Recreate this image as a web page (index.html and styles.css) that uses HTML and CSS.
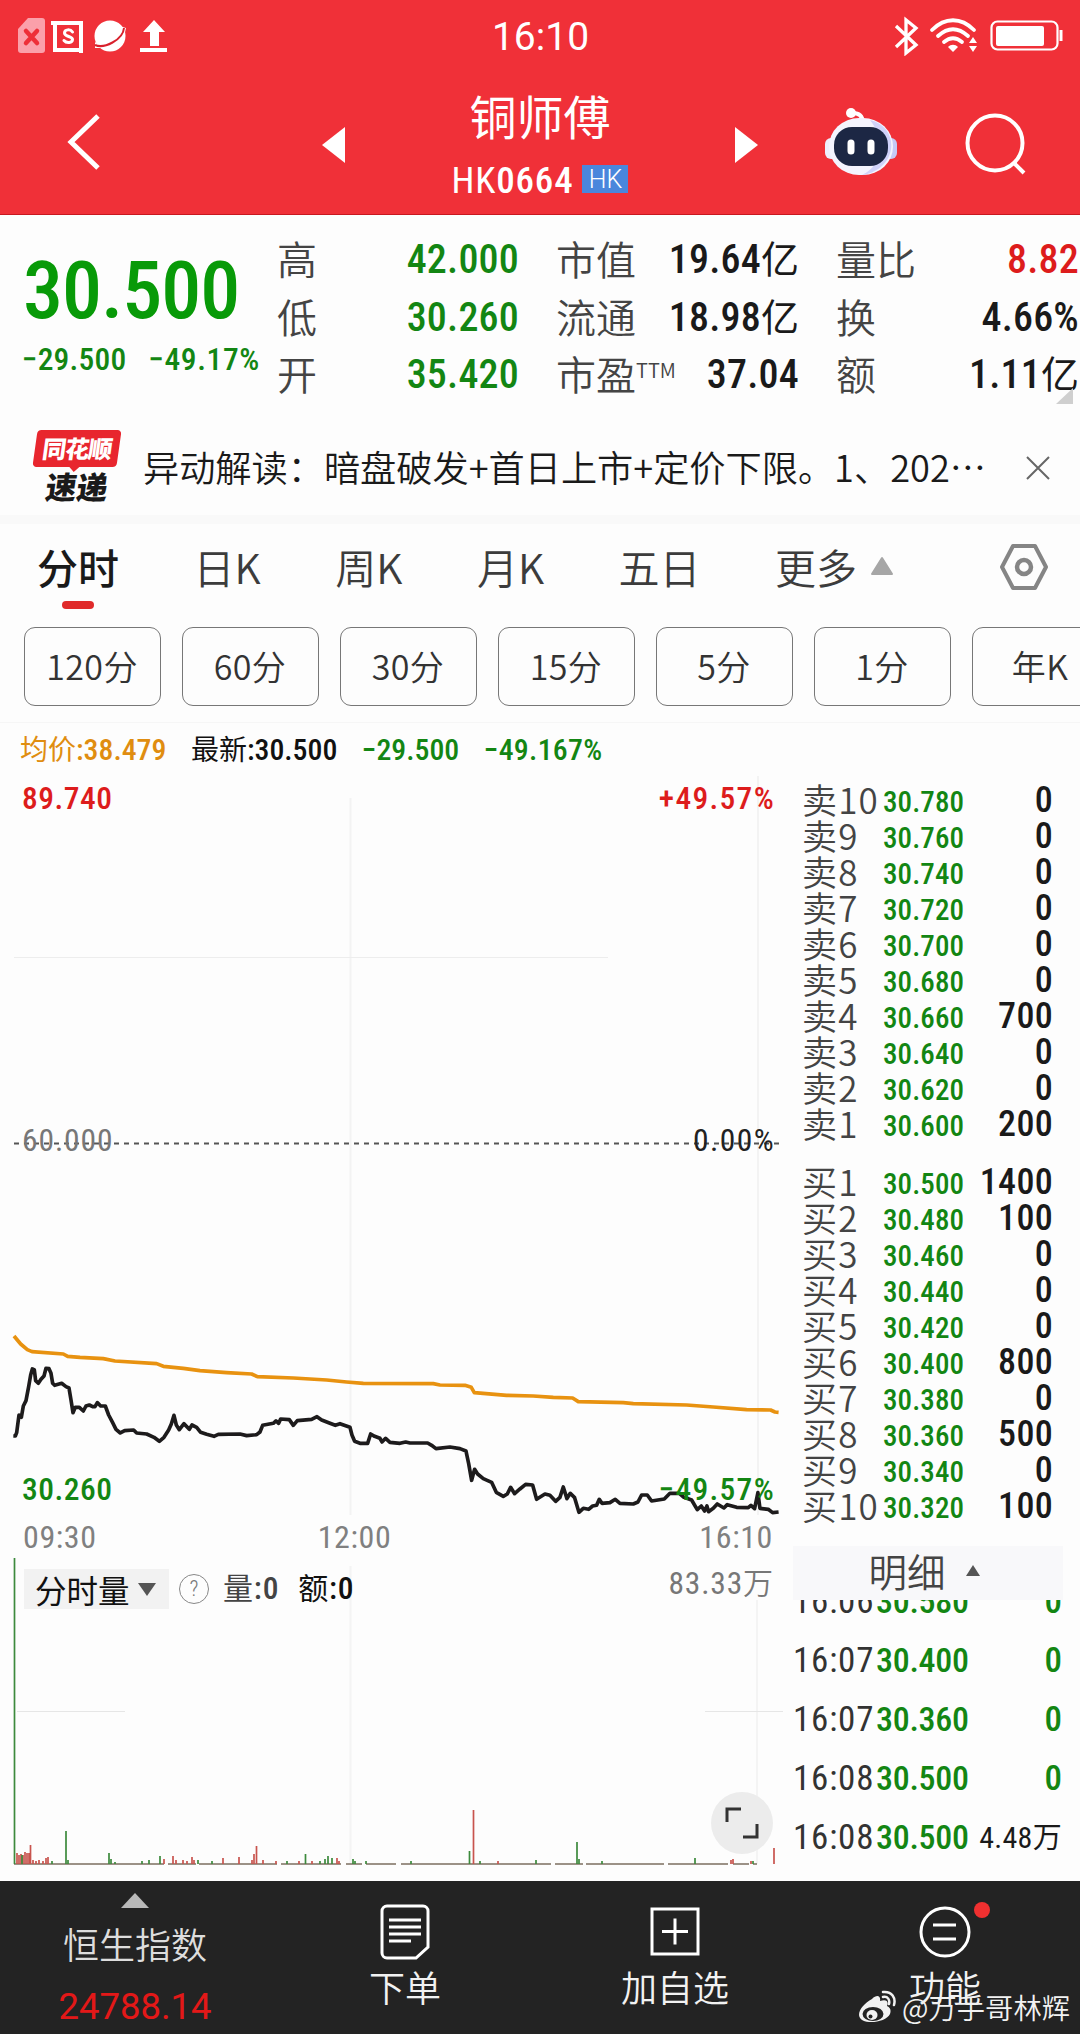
FILE: index.html
```
<!DOCTYPE html>
<html lang="zh-CN">
<head>
    <meta charset="UTF-8">
    <meta name="viewport" content="width=device-width, initial-scale=1.0">
    <title>铜师傅 HK0664</title>
    <link rel="stylesheet" href="styles.css">
</head>
<body>

    <header class="header">
        <div class="status-bar">
            <svg class="status-left" width="156" height="40" viewBox="0 0 156 40">
                <path d="M10 2h14a3 3 0 0 1 3 3v29a3 3 0 0 1-3 3H3a3 3 0 0 1-3-3V13z" fill="#fba0aa"/>
                <path d="M8 15l11 12M19 15L8 27" stroke="#ee2f38" stroke-width="4.5" stroke-linecap="round"/>
                <path d="M37 7h26v27M33 7h4v27h26v3" fill="none" stroke="#fff" stroke-width="4"/>
                <path d="M54.500 16c-2-3-8-3-8 1s8 3 8 6.500-6 4-8.500 1" fill="none" stroke="#fff" stroke-width="3" stroke-linecap="round"/>
                <circle cx="92" cy="20" r="15.500" fill="#fff"/>
                <path d="M77 26v6h8zM101 10l7 2-2 9z" fill="#fff"/>
                <path d="M77 29c9 4 28-5 29-17" fill="none" stroke="#d8202c" stroke-width="2"/>
                <path d="M136 4l11 12h-6v14h-9V16h-7z" fill="#fff"/>
                <path d="M122 34h27" stroke="#fff" stroke-width="4"/>
            </svg>
            <span class="clock">16:10</span>
            <svg class="status-right" width="170" height="40" viewBox="0 0 170 40">
                <path d="M2 10l20 19-10 8V4l10 8L2 31" fill="none" stroke="#fff" stroke-width="3.300"/>
                <path d="M38 14c13-13 29-13 42 0M44 20c10-9 20-9 30 0M50 26c6-5 12-5 18 0" fill="none" stroke="#fff" stroke-width="3.800" stroke-linecap="round"/>
                <path d="M59 36l-5-5c3-3 7-3 10 0z" fill="#fff"/>
                <path d="M79 21l4 6h-8zM79 36l-4-6h8z" fill="#fff"/>
                <rect x="97.500" y="5.500" width="66" height="28" rx="6" fill="none" stroke="#fff" stroke-width="2.200"/>
                <rect x="102" y="10" width="48" height="20" rx="2" fill="#fff"/>
                <path d="M167 14v11" stroke="#fff" stroke-width="3"/>
            </svg>
        </div>
        <div class="nav">
            <svg class="back" width="34" height="60" viewBox="0 0 34 60"><path d="M31 4L4 30l27 26" fill="none" stroke="#fff" stroke-width="5"/></svg>
            <svg class="prev" width="23" height="36" viewBox="0 0 23 36"><path d="M23 0v36L0 18z" fill="#fff"/></svg>
            <div class="title">
                <h1>铜师傅</h1>
                <div class="code">
                    <span><span class="hk">HK</span><span class="num">0664</span></span>
                    <span class="tag">HK</span>
                </div>
            </div>
            <svg class="next" width="23" height="36" viewBox="0 0 23 36"><path d="M0 0v36l23-18z" fill="#fff"/></svg>
            <svg class="robot" width="74" height="68" viewBox="0 0 74 68">
                <path d="M27 5q11-1 12 9" fill="none" stroke="#fff" stroke-width="4"/>
                <circle cx="27" cy="5" r="5" fill="#fff"/>
                <rect x="1" y="30" width="14" height="21" rx="6" fill="#eeeefc"/>
                <rect x="59" y="30" width="14" height="21" rx="6" fill="#c6c9f6"/>
                <rect x="5" y="10" width="64" height="57" rx="30" fill="#f4f4fe"/>
                <path d="M46 12c31 7 28 50-8 55 20-9 24-35 8-55z" fill="#d0d2fa"/>
                <rect x="10" y="19" width="54" height="39" rx="18" fill="#1c2744"/>
                <path d="M27 35v8M47 35v8" stroke="#fff" stroke-width="7" stroke-linecap="round"/>
            </svg>
            <svg class="search" width="62" height="62" viewBox="0 0 62 62">
                <circle cx="30" cy="30" r="27.500" fill="none" stroke="#fff" stroke-width="4"/>
                <path d="M48 49l11 11" stroke="#fff" stroke-width="4"/>
            </svg>
        </div>
    </header>

    <section class="quote">
        <div class="last">
            <div class="last-price num">30.500</div>
            <div class="last-change num"><span>−29.500</span><span>−49.17%</span></div>
        </div>
        <dl class="stats stats-a">
            <dt>高</dt><dd class="num down">42.000</dd>
            <dt>低</dt><dd class="num down">30.260</dd>
            <dt>开</dt><dd class="num down">35.420</dd>
        </dl>
        <dl class="stats stats-b">
            <dt>市值</dt><dd class="num">19.64<i>亿</i></dd>
            <dt>流通</dt><dd class="num">18.98<i>亿</i></dd>
            <dt>市盈<sup>TTM</sup></dt><dd class="num">37.04</dd>
        </dl>
        <dl class="stats stats-c">
            <dt>量比</dt><dd class="num up">8.82</dd>
            <dt>换</dt><dd class="num">4.66%</dd>
            <dt>额</dt><dd class="num">1.11<i>亿</i></dd>
        </dl>
        <span class="corner"></span>
    </section>

    <section class="news">
        <div class="news-logo">
            <span class="news-brand">同花顺</span>
            <span class="news-name">速递</span>
        </div>
        <p>异动解读：暗盘破发+首日上市+定价下限。1、202⋯</p>
        <svg class="close" width="24" height="24" viewBox="0 0 24 24"><path d="M1 1l22 22M23 1L1 23" stroke="#666" stroke-width="2"/></svg>
    </section>

    <nav class="tabs">
        <span class="tab active">分时</span>
        <span class="tab">日K</span>
        <span class="tab">周K</span>
        <span class="tab">月K</span>
        <span class="tab">五日</span>
        <span class="tab">更多<svg class="more" width="24" height="20" viewBox="0 0 24 20"><path d="M12 2L2 18h20z" fill="#a6a6a6" stroke="#a6a6a6" stroke-width="2" stroke-linejoin="round"/></svg></span>
        <svg class="gear" width="50" height="48" viewBox="0 0 50 48">
            <path d="M14 3h22l11 21-11 21H14L3 24z" fill="none" stroke="#858585" stroke-width="4" stroke-linejoin="round"/>
            <circle cx="25" cy="24" r="7" fill="none" stroke="#858585" stroke-width="4.500"/>
        </svg>
    </nav>

    <div class="chips">
        <span class="chip">120分</span>
        <span class="chip">60分</span>
        <span class="chip">30分</span>
        <span class="chip">15分</span>
        <span class="chip">5分</span>
        <span class="chip">1分</span>
        <span class="chip">年K</span>
    </div>

    <main class="main">
        <div class="left">
            <div class="info num">
                <span class="avg"><i>均价</i>:38.479</span>
                <span class="now"><i>最新</i>:30.500</span>
                <span class="down">−29.500</span>
                <span class="down">−49.167%</span>
            </div>

            <div class="chart">
                <svg width="790" height="740" viewBox="0 775 790 740">
                    <path d="M350.500 798v717M758 776v739" stroke="#f3f3f3" stroke-width="2"/>
                    <path d="M14 957.500h594" stroke="#ededed"/>
                    <path d="M14 1143.500h770" stroke="#555" stroke-width="2" stroke-dasharray="5 5"/>
                    <g transform="translate(0 1300) scale(.3333)" fill="none" stroke-linejoin="round">
                        <polyline stroke="#e89210" stroke-width="11" points="42,108 62,132 82,149 96,155 190,162 203,169 240,172 310,176 345,183 470,191 490,199 550,205 600,212 680,218 755,222 772,230 880,234 980,240 1040,246 1090,250 1300,251 1320,255 1395,256 1414,262 1423,278 1520,286 1600,288 1660,292 1718,294 1735,305 1870,308 1900,311 2060,315 2140,321 2240,329 2312,330 2325,336 2336,337"/>
                        <polyline stroke="#1d1b1c" stroke-width="11" points="40,408 46,408 50,398 57,345 64,352 70,318 78,302 86,260 92,225 97,207 103,210 107,242 115,250 123,238 132,228 138,205 147,206 153,220 158,250 164,256 185,250 198,260 207,264 213,300 219,338 226,322 238,322 250,333 258,318 268,315 278,320 285,320 292,308 302,318 316,318 326,345 338,368 348,388 361,399 374,392 401,390 410,399 440,402 462,412 478,424 492,412 506,390 514,372 522,346 529,375 538,389 552,371 568,388 576,375 590,382 602,397 620,403 642,409 655,403 720,402 740,407 770,404 780,396 788,376 820,370 828,363 836,370 842,357 868,359 880,376 892,362 935,358 951,350 965,360 990,370 1006,376 1020,371 1050,382 1056,405 1064,424 1080,430 1103,430 1112,402 1124,409 1140,415 1146,426 1157,415 1170,427 1200,430 1217,426 1230,429 1283,429 1295,436 1308,446 1350,441 1380,446 1398,453 1406,490 1415,541 1424,508 1433,522 1450,536 1475,547 1489,577 1510,589 1522,582 1532,562 1544,581 1560,567 1577,553 1598,555 1610,598 1635,582 1650,586 1667,604 1680,592 1690,561 1701,596 1711,580 1724,593 1737,637 1750,625 1766,628 1778,618 1790,616 1798,598 1806,610 1830,608 1846,598 1860,610 1900,612 1914,606 1925,585 1942,585 1955,603 1993,597 2010,580 2038,580 2052,592 2075,600 2092,629 2104,618 2114,633 2121,618 2126,635 2140,625 2152,612 2172,624 2182,614 2210,622 2245,623 2253,616 2264,626 2274,578 2280,625 2305,628 2318,638 2336,636"/>
                    </g>
                </svg>
                <div class="chart-label top"><span class="up">89.740</span><span class="up pct">+49.57%</span></div>
                <div class="chart-label mid"><span>60.000</span><span class="zero">0.00%</span></div>
                <div class="chart-label low"><span class="down">30.260</span><span class="down pct">−49.57%</span></div>
            </div>

            <div class="times"><span>09:30</span><span>12:00</span><span>16:10</span></div>

            <div class="volume">
                <svg width="790" height="323" viewBox="0 1558 790 323">
                    <path d="M350.500 1566v298M757 1600v264" stroke="#f4f4f4" stroke-width="2"/>
                    <path d="M17 1711.500h108M705 1711.500h78" stroke="#e6e6e6"/>
                    <path d="M14 1864h743" stroke="#7c6f60" stroke-width="1.500" stroke-dasharray="150 4 28 3 78 4 60 5 16 4 30 5"/>
                    <path id="vol-red" stroke="#c8544e" stroke-width="1.700"/>
                    <path id="vol-green" stroke="#3d8a3d" stroke-width="1.700"/>
                </svg>
                <div class="volume-head">
                    <span class="picker">分时量<svg width="18" height="13" viewBox="0 0 18 13"><path d="M0 0h18L9 13z" fill="#555"/></svg></span>
                    <span class="help">?</span>
                    <span class="vol"><i>量</i>:0</span>
                    <span class="amt"><i>额</i>:0</span>
                    <span class="vol-max">83.33<i>万</i></span>
                </div>
                <span class="expand">
                    <svg width="34" height="32" viewBox="0 0 34 32"><path d="M2 15V2h14M32 17v13H18" fill="none" stroke="#333" stroke-width="3"/></svg>
                </span>
            </div>
        </div>

        <div class="right">
            <div class="book" id="sell"></div>
            <div class="book" id="buy"></div>
            <div class="detail-bar">明细<svg width="14" height="11" viewBox="0 0 14 11"><path d="M7 0l7 11H0z" fill="#555"/></svg></div>
            <div class="trades" id="trades"></div>
        </div>
    </main>

    <footer class="footer">
        <div class="index">
            <svg width="28" height="15" viewBox="0 0 28 15"><path d="M14 0l14 15H0z" fill="#b9b9b9"/></svg>
            <span>恒生指数</span>
            <b>24788.14</b>
        </div>
        <div class="action">
            <svg width="52" height="58" viewBox="0 0 52 58">
                <path d="M8 3h36a5 5 0 0 1 5 5v36L37 55H8a5 5 0 0 1-5-5V8a5 5 0 0 1 5-5z" fill="none" stroke="#fff" stroke-width="3"/>
                <path d="M10 17h32M10 24h32M10 31h32M10 38h22" stroke="#fff" stroke-width="3"/>
            </svg>
            <span>下单</span>
        </div>
        <div class="action">
            <svg width="52" height="58" viewBox="0 0 52 58">
                <rect x="3" y="6" width="46" height="45" fill="none" stroke="#fff" stroke-width="3"/>
                <path d="M13 28.500h26M26 15.500v26" stroke="#fff" stroke-width="3"/>
            </svg>
            <span>加自选</span>
        </div>
        <div class="action">
            <svg width="52" height="58" viewBox="0 0 52 58">
                <circle cx="26" cy="29" r="24" fill="none" stroke="#fff" stroke-width="3"/>
                <path d="M14 22h23M14 36h23" stroke="#fff" stroke-width="3"/>
            </svg>
            <span>功能</span>
            <em class="dot"></em>
        </div>
        <div class="watermark">
            <svg width="38" height="34" viewBox="0 0 38 34">
                <path d="M14 9c5-5 9-3 8 2 6-2 9 0 7 5 4 2 4 5 3 8-4 9-30 12-31 1 0-6 6-12 13-16z" fill="#f2f2f2"/>
                <ellipse cx="15" cy="24" rx="10.500" ry="7" fill="#232323"/>
                <ellipse cx="14" cy="25" rx="5.500" ry="5" fill="#f2f2f2"/>
                <circle cx="12.500" cy="26.500" r="2" fill="#232323"/>
                <path d="M25 7c5-1 7 3 6 7M25 2c9-1 13 6 11 13" fill="none" stroke="#f2f2f2" stroke-width="2.500" stroke-linecap="round"/>
            </svg>
            <span>@万手哥林辉</span>
        </div>
    </footer>

    <script>
        // 十档卖盘和买盘: [价格, 数量]
        const sell = [
            ['30.780', 0], ['30.760', 0], ['30.740', 0], ['30.720', 0], ['30.700', 0],
            ['30.680', 0], ['30.660', 700], ['30.640', 0], ['30.620', 0], ['30.600', 200]
        ];
        const buy = [
            ['30.500', 1400], ['30.480', 100], ['30.460', 0], ['30.440', 0], ['30.420', 0],
            ['30.400', 800], ['30.380', 0], ['30.360', 500], ['30.340', 0], ['30.320', 100]
        ];
        const trades = [
            ['16:06', '30.580', '0'],
            ['16:07', '30.400', '0'],
            ['16:07', '30.360', '0'],
            ['16:08', '30.500', '0'],
            ['16:08', '30.500', '4.48<i>万</i>']
        ];

        function bookRow(name, row) {
            return `<div class="book-row"><span class="level">${name}</span><span class="price">${row[0]}</span><span class="qty">${row[1]}</span></div>`;
        }

        document.getElementById('sell').innerHTML = sell.map((r, i) => bookRow('卖' + (10 - i), r)).join('');
        document.getElementById('buy').innerHTML = buy.map((r, i) => bookRow('买' + (i + 1), r)).join('');
        document.getElementById('trades').innerHTML = trades.map(t =>
            `<div class="trade"><span class="time">${t[0]}</span><span class="price">${t[1]}</span><span class="${t[2] === '0' ? 'zero-qty' : 'big-qty'}">${t[2]}</span></div>`
        ).join('');

        // 成交量柱: [x, 高度]
        const red = [
            [17, 11], [19, 9], [21, 10], [23, 9], [25, 12], [27, 11], [29, 11], [30.5, 19], [33, 4], [36, 3], [39, 4],
            [43, 3], [46, 6], [48, 7], [164, 5], [173, 8], [176, 4], [183, 4], [187, 3], [192, 7], [194, 4], [223, 6],
            [239, 7], [252, 4], [254, 10], [256.5, 18], [263, 4], [276, 3], [299, 3], [312, 3], [337, 6], [339, 3],
            [473.5, 54], [498, 3], [731, 4], [733, 5], [751, 3], [774, 16]
        ];
        const green = [
            [14.5, 306], [22, 9], [52, 3], [66, 33], [68, 4], [109, 11], [111, 5], [115, 2], [142, 3], [149, 4], [160, 8],
            [198, 4], [212, 3], [287, 3], [305.5, 10], [320, 3], [325, 5], [328, 8], [332, 6], [353, 5], [355, 3],
            [366, 3], [411, 3], [469.5, 13], [480, 3], [536, 4], [577, 22], [579, 5], [602, 3], [695, 6], [753, 3]
        ];
        const bars = list => list.map(([x, h]) => `M${x} 1864v${-h}`).join('');
        document.getElementById('vol-red').setAttribute('d', bars(red));
        document.getElementById('vol-green').setAttribute('d', bars(green));
    </script>

</body>
</html>
```
FILE: styles.css
```
* {
    box-sizing: border-box;
}

body {
    margin: 0;
    width: 1080px;
    height: 2034px;
    overflow: hidden;
    background: #fdfdfd;
    color: #1a1a1a;
    font-family: "Noto Sans CJK SC", sans-serif;
    font-weight: 350;
}

svg {
    display: block;
    flex: none;
}

i {
    font-family: "Noto Sans CJK SC", sans-serif;
    font-style: normal;
    font-weight: 400;
}

/* 窄体数字 */
.num,
.chart-label,
.times,
.volume-head,
.book-row .price,
.book-row .qty,
.trade {
    font-family: Roboto, "Noto Sans CJK SC", sans-serif;
    font-stretch: 80%;
    font-weight: 500;
}

.up {
    color: #dd1c1c;
}

.down {
    color: #138613;
}

/* 顶部 */
.header {
    height: 215px;
    background: #f03038;
    border-bottom: 1px solid #c81820;
    color: #fff;
}

.status-bar {
    height: 74px;
    display: flex;
    justify-content: space-between;
    padding: 16px 18px 0;
}

.status-right {
    margin-right: -2px;
}

.clock {
    margin-left: 13px;
    font: 400 39px/43px Roboto, sans-serif;
}

.nav {
    height: 140px;
    display: flex;
    align-items: flex-start;
    padding-left: 67px;
}

.back {
    margin-top: 38px;
}

.prev {
    margin: 53px 0 0 221px;
}

.title {
    width: 390px;
    text-align: center;
}

.title h1 {
    margin: 12px 0 0;
    font-size: 47px;
    line-height: 58px;
    font-weight: 400;
}

.code {
    display: flex;
    justify-content: center;
    align-items: center;
    gap: 9px;
    margin-top: 14px;
    height: 42px;
    font-size: 37px;
    line-height: 42px;
    letter-spacing: .8px;
}

.hk {
    font-family: Roboto, sans-serif;
    font-weight: 400;
    font-stretch: 85%;
}

.tag {
    width: 46px;
    height: 28px;
    background: #4a86dc;
    font: 300 25px/29px Roboto, sans-serif;
    letter-spacing: 0;
    text-align: center;
}

.next {
    margin-top: 53px;
}

.robot {
    margin: 34px 0 0 66px;
}

.search {
    margin: 39px 0 0 67px;
}

/* 行情 */
.quote {
    position: relative;
    height: 205px;
    display: flex;
    padding: 16px 0 0 23px;
}

.last {
    width: 254px;
}

.last-price {
    margin-top: 13px;
    font-size: 80px;
    line-height: 94px;
    color: #089a08;
    font-weight: 540;
    letter-spacing: -1px;
}

.last-change {
    display: flex;
    gap: 22px;
    margin: 2px 0 0 -1px;
    font-size: 31.500px;
    line-height: 40px;
    letter-spacing: .2px;
    color: #138613;
    white-space: nowrap;
}

.last-change span:last-child {
    letter-spacing: .6px;
}

.stats {
    display: grid;
    grid-template-columns: 80px 1fr;
    grid-auto-rows: 57.5px;
    margin: 0;
    line-height: 58px;
    white-space: nowrap;
}

.stats-a {
    width: 242px;
}

.stats-b {
    width: 243px;
    margin-left: 37px;
}

.stats-c {
    width: 243px;
    margin-left: 37px;
}

.stats dt {
    font-size: 40px;
    line-height: 54px;
    color: #444;
    font-weight: 350;
}

.stats dd {
    margin: 0;
    font-size: 40px;
    letter-spacing: .2px;
    text-align: right;
}

.stats dd i {
    font-size: 38px;
    line-height: 0;
    letter-spacing: 0;
}

.stats sup {
    font-size: 20px;
    line-height: 0;
    vertical-align: 12px;
}

.corner {
    position: absolute;
    right: 7px;
    top: 173px;
    border-left: 17px solid transparent;
    border-bottom: 16px solid #cfcfcf;
}

/* 资讯 */
.news {
    height: 95px;
    display: flex;
    align-items: center;
    padding: 0 30px 0 35px;
}

.news-logo {
    width: 108px;
    margin-top: -4px;
}

.news-brand {
    display: block;
    width: 84px;
    height: 37px;
    border-radius: 4px;
    background: #e8262e;
    color: #fff;
    font-size: 24px;
    font-weight: 900;
    line-height: 36px;
    letter-spacing: -1px;
    text-align: center;
    transform: skewX(-8deg);
}

.news-brand::after {
    content: "";
    display: block;
    width: 0;
    margin: 0 auto;
    border: 6px solid transparent;
    border-top-color: #e8262e;
    border-bottom: 0;
}

.news-name {
    display: block;
    margin-top: 3px;
    width: 84px;
    font-size: 31px;
    font-weight: 900;
    line-height: 32px;
    text-align: center;
    transform: skewX(-8deg);
}

.news p {
    flex: 1;
    margin: -4px 0 0;
    font-size: 36.200px;
    white-space: nowrap;
}

/* 周期 */
.tabs {
    display: flex;
    align-items: flex-start;
    height: 112px;
    padding: 20px 31px 0 37px;
    border-top: 9px solid #f9f9f9;
    font-size: 41px;
    line-height: 44px;
    color: #3c3c3c;
}

.tab {
    display: flex;
    align-items: center;
    margin-right: 74.500px;
}

.tab.active {
    flex-direction: column;
    color: #1a1a1a;
    font-weight: 500;
}

.tab.active::after {
    content: "";
    width: 32px;
    height: 8px;
    margin-top: 13px;
    border-radius: 4px;
    background: #e02a2a;
}

.more {
    margin-left: 13px;
}

.gear {
    margin: -1px 0 0 auto;
}

.chips {
    display: flex;
    gap: 21px;
    height: 96px;
    padding-left: 24px;
    border-bottom: 1px solid #f6f6f6;
}

.chip {
    flex: none;
    width: 137px;
    height: 79px;
    border: 1px solid #777;
    border-radius: 11px;
    font-size: 34px;
    line-height: 75px;
    text-align: center;
    font-weight: 350;
    color: #333;
    letter-spacing: .4px;
    text-indent: -1px;
}

/* 走势图 */
.main {
    display: flex;
    height: 1158px;
}

.left {
    width: 790px;
}

.info {
    display: flex;
    height: 52px;
    padding: 0 20px;
    font-size: 29.800px;
    line-height: 53px;
    white-space: nowrap;
}

.info span {
    margin-right: 24.500px;
}

.info span:last-child {
    letter-spacing: .3px;
}

.info i {
    font-size: 28px;
    line-height: 0;
}

.avg {
    color: #e08d10;
}

.now {
    color: #111;
}

.chart {
    position: relative;
    height: 740px;
}

.chart-label {
    position: absolute;
    left: 22px;
    right: 15px;
    display: flex;
    justify-content: space-between;
    font-size: 31.500px;
    line-height: 36px;
    letter-spacing: .5px;
    color: #777;
}

.pct {
    letter-spacing: 1.300px;
}

.chart-label.top {
    top: 6px;
}

.chart-label.mid {
    top: 348px;
    font-weight: 400;
    letter-spacing: .9px;
}

.chart-label.low {
    top: 697px;
}

.chart-label .zero {
    color: #222;
    letter-spacing: 1.400px;
}

.times {
    display: flex;
    justify-content: space-between;
    height: 43px;
    padding: 0 17px 0 23px;
    font-size: 32px;
    line-height: 45px;
    letter-spacing: .6px;
    font-weight: 400;
    color: #808080;
}

.times span:nth-child(2) {
    margin-right: 87px;
}

.volume {
    position: relative;
    height: 323px;
}

.volume-head {
    position: absolute;
    left: 24px;
    right: 17px;
    top: 11px;
    display: flex;
    align-items: center;
    height: 40px;
    font-size: 31.500px;
}

.picker {
    display: flex;
    align-items: center;
    gap: 8px;
    width: 145px;
    height: 40px;
    padding-left: 11px;
    background: #f2f2f2;
    font-family: "Noto Sans CJK SC", sans-serif;
    font-weight: 400;
    color: #111;
    line-height: 38px;
}

.help {
    width: 30px;
    height: 30px;
    margin-left: 10px;
    border: 1.500px solid #888;
    border-radius: 50%;
    font-size: 22px;
    font-weight: 300;
    line-height: 28px;
    text-align: center;
    color: #777;
}

.volume-head i {
    font-size: 30px;
    line-height: 0;
}

.vol,
.amt {
    margin: -2px 0 0 14px;
    letter-spacing: .8px;
    color: #444;
}

.amt {
    margin-left: 19px;
    color: #111;
}

.vol-max {
    margin: -11px 0 0 auto;
    font-weight: 400;
    letter-spacing: .8px;
    color: #777;
}

.vol-max i {
    font-weight: 350;
    letter-spacing: 0;
}

.expand {
    position: absolute;
    left: 711px;
    top: 234px;
    width: 62px;
    height: 62px;
    display: flex;
    align-items: center;
    justify-content: center;
    border-radius: 50%;
    background: #ececec;
}

/* 买卖盘 */
.right {
    width: 290px;
    padding: 59px 17px 0 3px;
}

.book {
    margin-bottom: 22px;
    padding: 0 10px 0 9px;
}

.book-row {
    display: flex;
    height: 36px;
    line-height: 37px;
    white-space: nowrap;
}

.level {
    width: 81px;
    font-size: 35px;
    line-height: 33px;
    font-weight: 350;
    letter-spacing: 1.200px;
    color: #444;
}

.book-row .price {
    font-size: 29px;
    line-height: 40px;
    letter-spacing: .1px;
    color: #138613;
}

.book-row .qty {
    flex: 1;
    font-size: 36px;
    letter-spacing: .3px;
    text-align: right;
}

.detail-bar {
    display: flex;
    align-items: center;
    justify-content: center;
    gap: 20px;
    height: 54px;
    padding-right: 8px;
    background: #f8f8fa;
    font-size: 38.500px;
    font-weight: 350;
    color: #444;
    line-height: 48px;
    padding-bottom: 6px;
}

.trades {
    height: 282px;
    overflow: hidden;
}

.trade {
    display: flex;
    height: 59px;
    padding: 0 1px 0 0;
    font-size: 35px;
    line-height: 59px;
    white-space: nowrap;
}

.trade:first-child {
    margin-top: -28px;
}

.trade .time {
    width: 83px;
    font-weight: 450;
    letter-spacing: .8px;
    color: #333;
}

.trade .price {
    font-size: 34px;
    letter-spacing: -.3px;
}

.trade .price,
.zero-qty {
    color: #138613;
}

.zero-qty,
.big-qty {
    flex: 1;
    text-align: right;
}

.big-qty {
    font-size: 30px;
    font-weight: 450;
    letter-spacing: .3px;
}

.big-qty i {
    font-size: 29px;
    line-height: 0;
}

/* 底栏 */
.footer {
    position: relative;
    height: 153px;
    display: grid;
    grid-template-columns: repeat(4, 270px);
    background: #232323;
    color: #f2f2f2;
    font-size: 36px;
    line-height: 44px;
}

.index,
.action {
    position: relative;
    display: flex;
    flex-direction: column;
    align-items: center;
}

.index {
    padding-top: 12px;
    color: #ddd;
}

.index span {
    margin-top: 13px;
}

.index b {
    margin-top: 20px;
    font: 400 36.500px/44px Roboto, sans-serif;
    color: #e31818;
}

.action {
    padding-top: 22px;
}

.action span {
    margin-top: 3px;
}

.dot {
    position: absolute;
    left: 164px;
    top: 21px;
    width: 16px;
    height: 16px;
    border-radius: 50%;
    background: #f03030;
}

.watermark {
    position: absolute;
    right: 10px;
    bottom: 6px;
    display: flex;
    align-items: center;
    gap: 6px;
    font-size: 28.300px;
    line-height: 42px;
}
```
